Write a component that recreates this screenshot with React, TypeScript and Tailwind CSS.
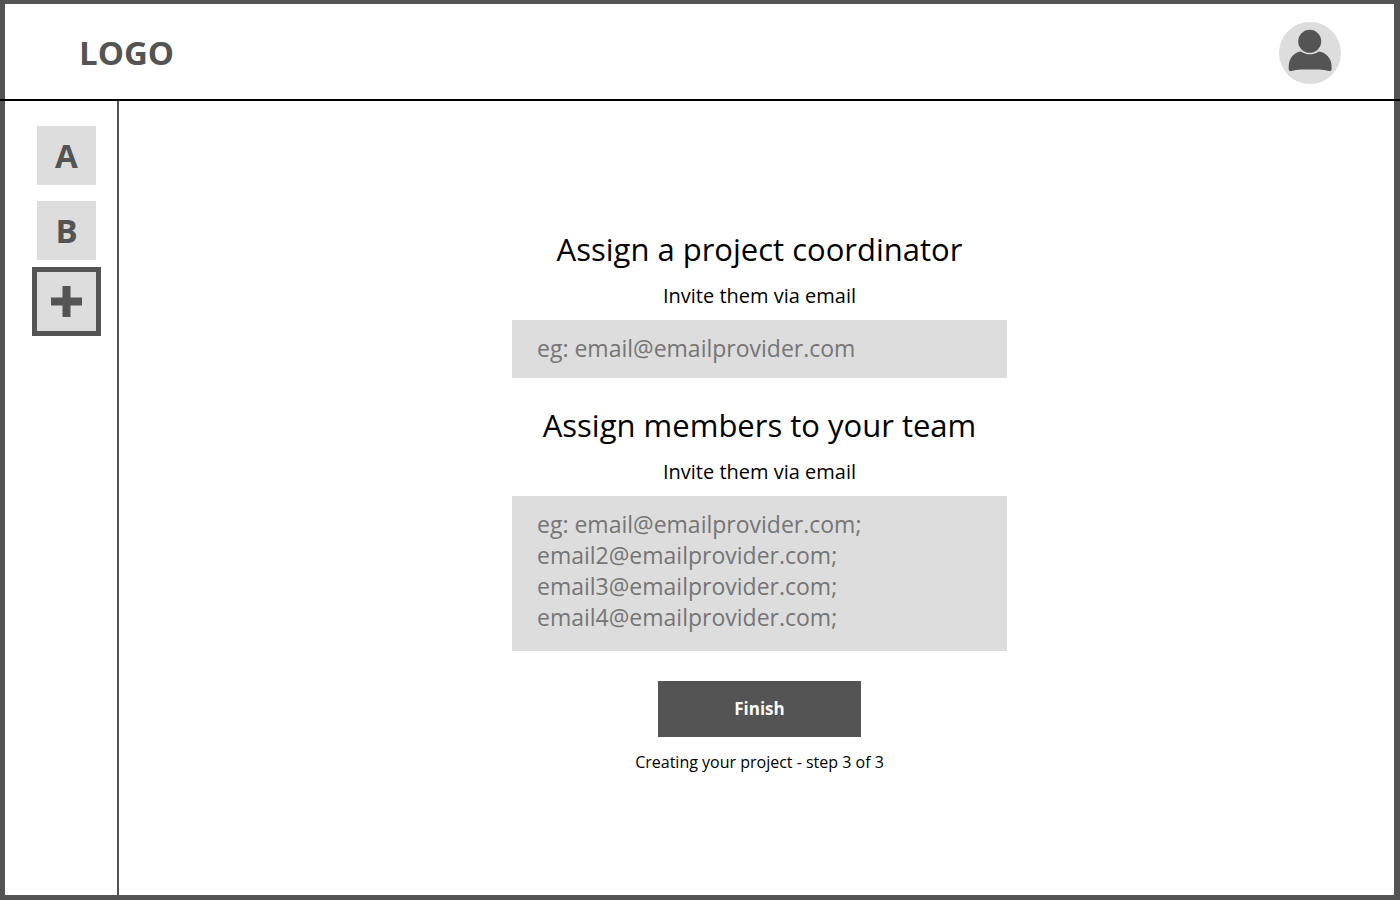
import React from "react";

const teams = ["A", "B"];

function AvatarIcon() {
  return (
    <svg viewBox="0 0 62 62" className="block size-[62px]" aria-hidden="true">
      <circle cx="31" cy="31" r="31" fill="#dddddd" />
      <circle cx="30.7" cy="19.3" r="11.5" fill="#545454" />
      <path
        d="M22 29.400C24.500 31.300 27.400 32.200 30.900 32.200S37.300 31.300 39.800 29.400C47 30.200 52.600 36.600 52.600 44V47C52.600 48.700 51.500 49.300 50.100 49.100C46.500 48.400 43.500 47.600 40.500 47.500H22C18.500 47.600 15.800 48.400 12.300 49.100C10.800 49.300 9.700 48.700 9.700 47V44C9.700 36.600 15 30.200 22 29.400Z"
        fill="#545454"
      />
    </svg>
  );
}

export default function App() {
  return (
    <div className="flex min-h-screen flex-col bg-[#545454] font-['Open_Sans',sans-serif] text-black">
      <header className="border-b-2 border-black pt-1 pr-1.5 pl-[5px]">
        <div className="flex h-[95px] items-center justify-between bg-white pt-0.5 pr-[53px] pl-[74px]">
          <a href="#" className="text-[33px] leading-[46px] font-bold text-[#545454]">
            LOGO
          </a>
          <button type="button" aria-label="Account" className="rounded-full">
            <AvatarIcon />
          </button>
        </div>
      </header>

      <div className="flex flex-1 pr-1.5 pb-[5px] pl-[5px]">
        <nav
          aria-label="Projects"
          className="flex w-[114px] shrink-0 flex-col items-start border-r-2 border-[#545454] bg-white pt-[25px] pl-[27px]"
        >
          <div className="flex flex-col gap-4 px-[5px]">
            {teams.map((team) => (
              <button
                key={team}
                type="button"
                className="flex size-[59px] items-center justify-center bg-[#dddddd] text-[33px] leading-[46px] font-bold text-[#545454]"
              >
                {team}
              </button>
            ))}
          </div>
          <button
            type="button"
            aria-label="Add project"
            className="mt-[7px] flex size-[69px] items-center justify-center border-[5px] border-[#545454] bg-[#dddddd]"
          >
            <svg viewBox="0 0 31 31" className="size-[31px]" aria-hidden="true">
              <path d="M11.500 0h8v11.500H31v8H19.500V31h-8V19.500H0v-8h11.500z" fill="#545454" />
            </svg>
          </button>
        </nav>

        <main className="flex flex-1 justify-center bg-white pt-[127px] pb-10 pl-1.5">
          <form
            className="flex w-[495px] flex-col items-center"
            onSubmit={(event) => event.preventDefault()}
          >
            <h2 className="text-[31px] leading-[42px]">Assign a project coordinator</h2>
            <label htmlFor="coordinator" className="mt-3 text-[20px] leading-7">
              Invite them via email
            </label>
            <input
              id="coordinator"
              type="email"
              placeholder="eg: email@emailprovider.com"
              className="mt-2.5 h-[58px] w-full bg-[#dddddd] px-[25px] pb-0.5 text-[23px] leading-[31px] placeholder:text-[#757575]"
            />

            <h2 className="mt-[26px] text-[31px] leading-[42px]">Assign members to your team</h2>
            <label htmlFor="members" className="mt-3 text-[20px] leading-7">
              Invite them via email
            </label>
            <textarea
              id="members"
              rows={4}
              placeholder={
                "eg: email@emailprovider.com;\nemail2@emailprovider.com;\nemail3@emailprovider.com;\nemail4@emailprovider.com;"
              }
              className="mt-2.5 h-[155px] w-full resize-none bg-[#dddddd] px-[25px] py-[13px] text-[23px] leading-[31px] placeholder:text-[#757575]"
            />

            <button
              type="submit"
              className="mt-[30px] h-14 w-[203px] bg-[#545454] text-[17px] leading-6 font-bold text-white"
            >
              Finish
            </button>
            <p className="mt-[13px] text-[16px] leading-6">Creating your project - step 3 of 3</p>
          </form>
        </main>
      </div>
    </div>
  );
}
